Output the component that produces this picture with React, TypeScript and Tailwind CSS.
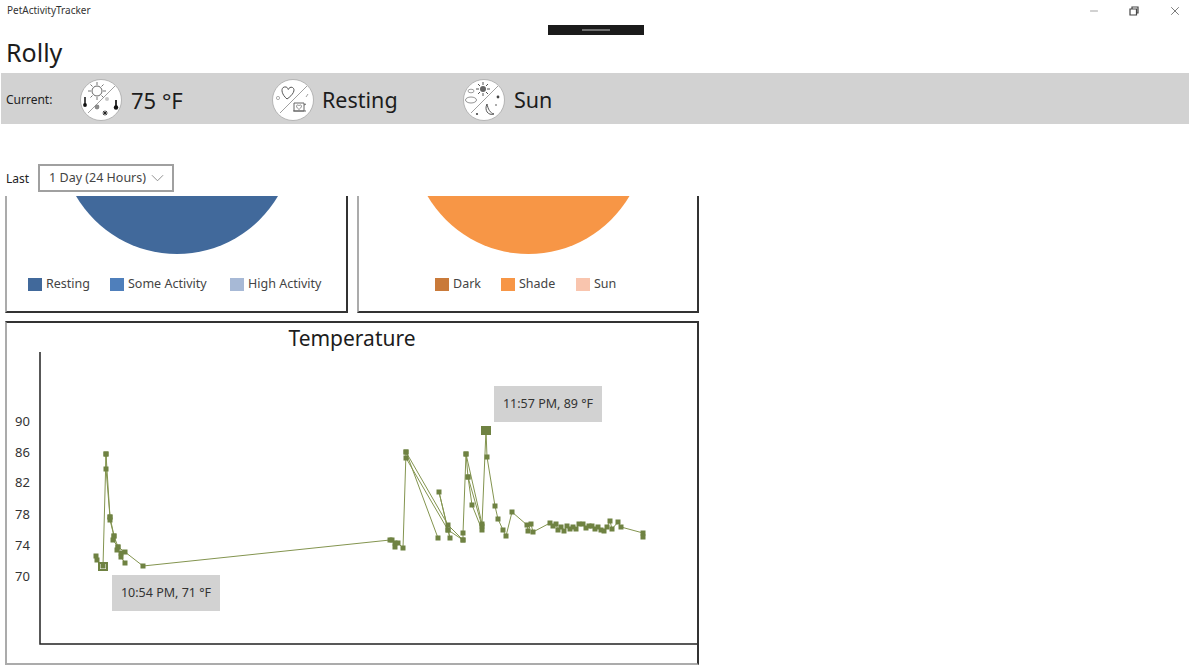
import { Minus, X } from "lucide-react";

type Pt = [number, number];

// traced in page coordinates, the chart's viewBox is offset to match
const series: Pt[][] = [
  [[96, 556], [97, 560], [103, 566], [106, 454], [106, 469], [110, 517], [110, 520], [114, 536], [113, 540], [118, 547], [117, 550], [121, 553], [121, 557], [125, 563]],
  [[106, 454], [110, 517], [114, 536], [118, 547], [125, 552], [143, 566], [390, 540], [392, 540], [395, 543], [395, 547], [398, 543], [403, 548], [406, 452], [438, 538]],
  [[406, 458], [448, 530], [450, 538], [439, 492], [448, 530], [463, 540], [463, 533], [466, 454], [468, 477], [472, 505], [482, 530], [482, 526], [468, 477]],
  [[406, 452], [448, 525], [463, 540]],
  [[466, 454], [482, 524], [486, 430], [487, 457], [495, 506], [498, 519], [503, 530], [506, 536], [512, 512], [527, 525], [528, 531], [531, 524], [533, 532], [550, 523], [553, 526], [556, 524], [558, 530], [561, 527], [564, 531], [567, 526], [570, 529], [573, 527], [576, 529], [579, 524], [583, 524], [586, 528], [589, 526], [592, 526], [595, 529], [598, 527], [601, 530], [604, 531], [607, 527], [610, 521], [612, 529], [618, 522], [621, 527], [643, 533], [643, 537]],
];

const yLabels = [
  { label: "90", y: 421 },
  { label: "86", y: 452 },
  { label: "82", y: 482 },
  { label: "78", y: 514 },
  { label: "74", y: 545 },
  { label: "70", y: 576 },
];

function TempIcon() {
  return (
    <svg viewBox="0 0 42 42" className="w-[42px] h-[42px] shrink-0">
      <circle cx="21" cy="21" r="20.5" fill="#fff" stroke="#a8a8a8" strokeWidth="0.8" />
      <path d="M8 34 L35 7" stroke="#888" strokeWidth="0.8" />
      <circle cx="17" cy="12" r="5" fill="none" stroke="#666" strokeWidth="1" />
      <path d="M17 3v3M17 18v3M8 12h3M23 12h3M10.500 5.500l2 2M21.500 16.500l2 2M23.500 5.500l-2 2M12.500 16.500l-2 2" stroke="#777" strokeWidth="1" />
      <path d="M5 18v7" stroke="#111" strokeWidth="1.500" />
      <circle cx="5" cy="26" r="1.900" fill="#111" />
      <path d="M36 21v7" stroke="#111" strokeWidth="1.700" />
      <circle cx="36" cy="28.500" r="2.200" fill="#111" />
      <circle cx="17" cy="28" r="2.400" fill="#8a8a8a" />
      <circle cx="27" cy="20" r="2" fill="#c9c9c9" />
      <path d="M25 31.500v5M22.600 34h5M23.200 32.200l3.600 3.600M26.800 32.200l-3.600 3.600" stroke="#222" strokeWidth="1" />
    </svg>
  );
}

function ActivityIcon() {
  return (
    <svg viewBox="0 0 42 42" className="w-[42px] h-[42px] shrink-0">
      <circle cx="21" cy="21" r="20.5" fill="#fff" stroke="#a8a8a8" strokeWidth="0.8" />
      <path d="M8 34 L35 7" stroke="#888" strokeWidth="0.8" />
      <path d="M15 20 C8 14 9 7 14 8 C15.500 8.400 16 9.500 16.300 10.500 C17 9 18.500 7.500 20.500 8.500 C24 10.500 21 16 15 20Z" fill="none" stroke="#555" strokeWidth="1" />
      <circle cx="6" cy="19" r="1.600" fill="none" stroke="#999" strokeWidth="0.8" />
      <path d="M21 32h13M22 24h10v8H22zM32 26l2-1" fill="none" stroke="#666" strokeWidth="1" />
      <path d="M27 30.500c-3.500-2.500-2.800-4.800-1.100-4.500.6 0 .9.500 1.100.8.200-.3.500-.8 1.100-.8 1.700-.3 2.400 2-1.100 4.500z" fill="none" stroke="#777" strokeWidth="0.8" />
      <path d="M34 18l2-3" stroke="#888" strokeWidth="0.8" />
    </svg>
  );
}

function LightIcon() {
  return (
    <svg viewBox="0 0 42 42" className="w-[42px] h-[42px] shrink-0">
      <circle cx="21" cy="21" r="20.500" fill="#fff" stroke="#a8a8a8" strokeWidth="0.8" />
      <path d="M8 34 L35 7" stroke="#888" strokeWidth="0.8" />
      <circle cx="20" cy="10" r="3" fill="#666" />
      <path d="M20 3v3M20 14v3M13 10h3M24 10h3M15 5l2 2M23 13l2 2M25 5l-2 2M17 13l-2 2" stroke="#555" strokeWidth="1" />
      <ellipse cx="8" cy="21" rx="5.500" ry="3" fill="none" stroke="#888" strokeWidth="0.9" />
      <ellipse cx="8" cy="12" rx="3" ry="1.800" fill="none" stroke="#888" strokeWidth="0.8" />
      <path d="M24 25 C21 31 25 37 31 35 C27 34 25 30 24 25Z" fill="none" stroke="#555" strokeWidth="1" />
      <circle cx="35" cy="18" r="1.400" fill="#444" />
      <circle cx="33" cy="26" r="0.800" fill="#444" />
      <circle cx="14" cy="35" r="1.100" fill="#444" />
    </svg>
  );
}

function Pie({ fill, d }: { fill: string; d: string }) {
  return (
    <svg viewBox="0 0 340 58" className="w-[340px] h-[58px] shrink-0">
      <path d={d} fill={fill} />
    </svg>
  );
}

function LegendItem({ color, label, width }: { color: string; label: string; width: string }) {
  return (
    <div className={`flex items-center gap-1 ${width}`}>
      <span className="w-[14px] h-[13px] shrink-0" style={{ backgroundColor: color }} />
      <span className="text-[12.5px] leading-none text-[#444] whitespace-nowrap">{label}</span>
    </div>
  );
}

export default function App() {
  return (
    <div className="relative w-[1189px] h-[668px] overflow-hidden bg-white flex flex-col text-[#1c1c1c] font-['Noto_Sans',sans-serif]">
      {/* title bar */}
      <div className="h-[22px] shrink-0 flex items-center justify-between pl-[7px] pr-[7px]">
        <span className="text-[10px] leading-none text-[#333] -mt-[2px]">PetActivityTracker</span>
        <div className="flex items-center gap-[28px] text-[#444]">
          <Minus size={12} strokeWidth={1} />
          <svg viewBox="0 0 12 12" className="w-[12px] h-[12px]" fill="none" stroke="currentColor" strokeWidth="1.2">
            <path d="M2 4h6.500v6H2zM4 4V2h6v6H8.500" />
          </svg>
          <X size={14} strokeWidth={1.2} />
        </div>
      </div>
      <div className="absolute left-[548px] top-[25px] w-[96px] h-[10px] bg-[#1b1b1b] flex items-center justify-center">
        <span className="w-[28px] h-[2px] bg-[#6e6e6e]" />
      </div>

      <div className="h-[51px] shrink-0 pl-[6px] text-[25px] leading-[61px]">Rolly</div>

      {/* current status band */}
      <div className="h-[51px] shrink-0 ml-[1px] bg-[#d2d2d2] flex items-center pt-[2px]">
        <span className="w-[79px] pl-[5px] text-[12px] text-[#222]">Current:</span>
        <div className="flex items-center gap-[9px] w-[192px]">
          <TempIcon />
          <span className="text-[22px] mt-[2px]">75 °F</span>
        </div>
        <div className="flex items-center gap-[8px] w-[191px]">
          <ActivityIcon />
          <span className="text-[21.500px] mt-[2px]">Resting</span>
        </div>
        <div className="flex items-center gap-[9px]">
          <LightIcon />
          <span className="text-[21.500px] mt-[2px]">Sun</span>
        </div>
      </div>

      {/* range */}
      <div className="mt-[40px] h-[28px] shrink-0 flex items-center pl-[6px] gap-[9px]">
        <span className="text-[12px] text-[#222] mt-[1px]">Last</span>
        <div className="w-[136px] h-[28px] border-2 border-[#a0a0a0] flex items-center justify-between pl-[9px] pr-[8px]">
          <span className="text-[12.500px] text-[#444] whitespace-nowrap">1 Day (24 Hours)</span>
          <svg viewBox="0 0 14 8" className="w-[13px] h-[8px]" fill="none" stroke="#888" strokeWidth="1">
            <path d="M1 1l6 6 6-6" />
          </svg>
        </div>
      </div>

      {/* scrolled content */}
      <div className="mt-[4px] flex-1 min-h-0 overflow-hidden pl-[5px] flex flex-col gap-[8px]">
        <div className="flex gap-[9px] shrink-0">
          <div className="w-[343px] h-[117px] border-2 border-t-0 border-l-[#ababab] border-r-[#333] border-b-[#333] flex flex-col overflow-hidden">
            <Pie fill="#41699b" d="M69 0 A117 117 0 0 0 271 0 Z" />
            <div className="mt-[24px] pl-[21px] flex">
              <LegendItem color="#41699b" label="Resting" width="w-[82px]" />
              <LegendItem color="#4f7fbb" label="Some Activity" width="w-[120px]" />
              <LegendItem color="#a7b9d6" label="High Activity" width="w-[92px]" />
            </div>
          </div>
          <div className="w-[342px] h-[117px] border-2 border-t-0 border-l-[#ababab] border-r-[#333] border-b-[#333] flex flex-col overflow-hidden">
            <Pie fill="#f79646" d="M68.500 0 A117 117 0 0 0 270.500 0 Z" />
            <div className="mt-[24px] pl-[76px] flex">
              <LegendItem color="#c97a3a" label="Dark" width="w-[66px]" />
              <LegendItem color="#f79646" label="Shade" width="w-[75px]" />
              <LegendItem color="#f9c5ae" label="Sun" width="w-[50px]" />
            </div>
          </div>
        </div>

        {/* temperature chart */}
        <div className="relative w-[694px] h-[344px] shrink-0 border-2 border-t-[#333] border-r-[#333] border-l-[#ababab] border-b-[#ababab]">
          <div className="text-center text-[21px] leading-none pt-[5px]">Temperature</div>
          <svg viewBox="7 323 690 340" className="absolute inset-0 w-full h-full">
            <path d="M40 352V644H698" fill="none" stroke="#222" strokeWidth="1.500" />
            {yLabels.map((t) => (
              <text key={t.label} x="15" y={t.y + 5} fontSize="13" fill="#333">
                {t.label}
              </text>
            ))}
            {series.map((s, i) => (
              <polyline key={i} points={s.map((p) => p.join(",")).join(" ")} fill="none" stroke="#83944f" strokeWidth="1" />
            ))}
            {series.flatMap((s, i) =>
              s.map((p, j) => <rect key={`${i}-${j}`} x={p[0] - 2.5} y={p[1] - 2.5} width="5" height="5" fill="#6f8242" />)
            )}
            <rect x="99" y="563" width="8" height="7" fill="none" stroke="#6f8242" strokeWidth="2" />
            <rect x="481" y="426" width="10" height="9" fill="#6f8242" />
          </svg>
          <div className="absolute left-[105px] top-[252px] w-[108px] h-[36px] bg-[#d2d2d2] flex items-center justify-center text-[12.500px] text-[#333] whitespace-nowrap">
            10:54 PM, 71 °F
          </div>
          <div className="absolute left-[487px] top-[63px] w-[108px] h-[36px] bg-[#d2d2d2] flex items-center justify-center text-[12.500px] text-[#333] whitespace-nowrap">
            11:57 PM, 89 °F
          </div>
        </div>
      </div>
    </div>
  );
}
